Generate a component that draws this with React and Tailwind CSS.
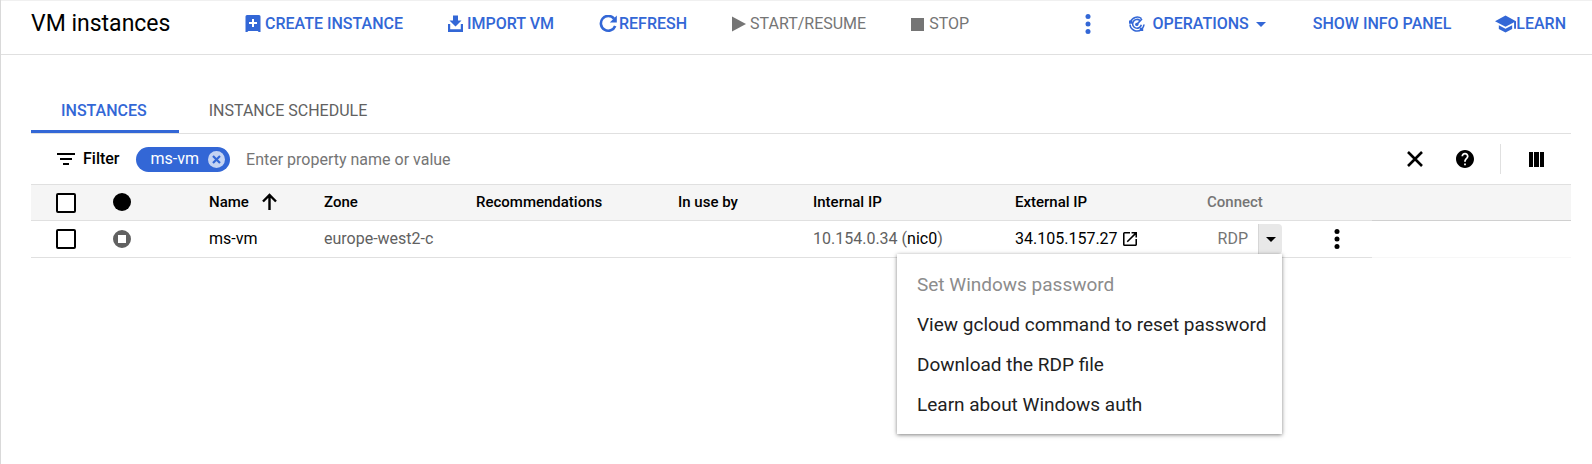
import React from "react";

const toolbarButton =
  "flex h-8 cursor-pointer items-center whitespace-nowrap text-base font-medium text-[#3367d6]";
const toolbarButtonDisabled =
  "flex h-8 items-center whitespace-nowrap text-base text-[#757575]";

function Icon({ className, viewBox = "0 0 24 24", children }) {
  return (
    <svg className={"shrink-0 " + className} viewBox={viewBox} fill="currentColor" aria-hidden="true">
      {children}
    </svg>
  );
}

function CreateIcon() {
  return (
    <Icon className="h-[18px] w-4" viewBox="0 0 16 18">
      <path
        fillRule="evenodd"
        d="M2 0h12a1.500 1.500 0 0 1 1.500 1.500v15.500h-1.800l-1-1h-9.400l-1 1H0.500V1.500A1.500 1.500 0 0 1 2 0zM7 4v3H4v2h3v3h2V9h3V7H9V4z"
      />
    </Icon>
  );
}

function ImportIcon() {
  return (
    <Icon className="h-[18px] w-[15px]" viewBox="0 0 15 18">
      <path d="M5 0.500h5v5h3.500L7.500 11.500 1.500 5.500H5z" />
      <path d="M0 9h2.200v5.200h10.600V9H15v8H0z" />
    </Icon>
  );
}

function RefreshIcon() {
  return (
    <Icon className="h-[18px] w-[18px]" viewBox="0 0 18 18">
      <path
        d="M15 3.600A7.400 7.400 0 1 0 16.200 11"
        fill="none"
        stroke="currentColor"
        strokeWidth="2.600"
      />
      <path d="M17.800 0.600v7h-7z" />
    </Icon>
  );
}

function OperationsIcon() {
  return (
    <Icon className="h-4 w-4" viewBox="0 0 16 16">
      <g fill="none" stroke="currentColor" strokeWidth="1.600">
        <path d="M12.500 2.600A7 7 0 0 0 1.500 6" />
        <path d="M1 8.500A7 7 0 0 0 12.500 13.300A7 7 0 0 0 15 8.500" />
        <path d="M11 4.600A4.400 4.400 0 1 0 12.300 8.800" />
        <path d="M7.800 8.400L13 3" />
      </g>
      <circle cx="7.800" cy="8.400" r="1.700" />
      <path d="M0 4.500h3.200v3.200H0zM10.800 11.800h3.400v3.200h-3.400z" />
    </Icon>
  );
}

function MoreIcon() {
  return (
    <Icon className="h-5 w-[6px]" viewBox="0 0 6 20">
      <circle cx="3" cy="2.500" r="2.500" />
      <circle cx="3" cy="10" r="2.500" />
      <circle cx="3" cy="17.500" r="2.500" />
    </Icon>
  );
}

function CaretIcon() {
  return (
    <Icon className="h-[5px] w-[10px]" viewBox="0 0 10 5">
      <path d="M0 0h10L5 5z" />
    </Icon>
  );
}

function Toolbar() {
  return (
    <header className="flex h-[55px] items-start border-t border-b border-t-[#f0f0f0] border-b-[#e0e0e0] pt-[7px] pr-[26px] pl-[30px]">
      <h1 className="w-[214px] shrink-0 text-[23px] leading-8 whitespace-nowrap">VM instances</h1>
      <div className="flex items-center gap-[45px]">
        <button type="button" className={toolbarButton + " gap-1"}>
          <CreateIcon />
          CREATE INSTANCE
        </button>
        <button type="button" className={toolbarButton + " gap-1"}>
          <ImportIcon />
          IMPORT VM
        </button>
        <button type="button" className={toolbarButton + " gap-[2px]"}>
          <RefreshIcon />
          REFRESH
        </button>
        <button type="button" disabled className={toolbarButtonDisabled + " gap-1"}>
          <Icon className="h-4 w-[14px]" viewBox="0 0 14 16">
            <path d="M0 0.500v15L14 8z" />
          </Icon>
          START/RESUME
        </button>
        <button type="button" disabled className={toolbarButtonDisabled + " gap-[5px]"}>
          <Icon className="h-[13px] w-[13px]" viewBox="0 0 13 13">
            <path d="M0 0h13v13H0z" />
          </Icon>
          STOP
        </button>
      </div>
      <div className="ml-auto flex items-center gap-[47px]">
        <div className="flex items-center gap-[38px]">
          <button type="button" aria-label="More actions" className={toolbarButton}>
            <MoreIcon />
          </button>
          <button type="button" className={toolbarButton + " gap-[7px]"}>
            <OperationsIcon />
            OPERATIONS
            <CaretIcon />
          </button>
        </div>
        <div className="flex items-center gap-[44px]">
          <button type="button" className={toolbarButton}>
            SHOW INFO PANEL
          </button>
          <button type="button" className={toolbarButton}>
            <Icon className="h-[18px] w-[21px]" viewBox="1 3 22 18">
              <path d="M5 13.180v4L12 21l7-3.820v-4L12 17l-7-3.820zM12 3L1 9l11 6 9-4.910V17h2V9L12 3z" />
            </Icon>
            LEARN
          </button>
        </div>
      </div>
    </header>
  );
}

function Tabs() {
  return (
    <div role="tablist" className="flex border-b border-[#e0e0e0]">
      <button
        type="button"
        role="tab"
        aria-selected="true"
        className="h-[46px] border-b-[3px] border-[#3367d6] pt-1 pr-8 pl-[30px] text-base font-medium text-[#3367d6]"
      >
        INSTANCES
      </button>
      <button
        type="button"
        role="tab"
        aria-selected="false"
        className="h-[46px] border-b-[3px] border-transparent pt-1 pr-8 pl-[30px] text-base text-[#616161]"
      >
        INSTANCE SCHEDULE
      </button>
    </div>
  );
}

function FilterBar() {
  return (
    <div className="flex h-[50px] items-center pl-[26px]">
      <Icon className="h-3 w-[18px]" viewBox="0 0 18 12">
        <path d="M0 0h18v2H0zM3 5h12v2H3zM6 10h6v2H6z" />
      </Icon>
      <label htmlFor="filter" className="ml-2 text-base font-medium">
        Filter
      </label>
      <span className="ml-4 flex h-[25px] items-center gap-[9px] rounded-full bg-[#3367d6] pr-[5px] pl-[15px] text-base text-white">
        ms-vm
        <button type="button" aria-label="Remove ms-vm" className="cursor-pointer text-[#c5d4f3]">
          <Icon className="h-[17px] w-[17px]" viewBox="0 0 17 17">
            <circle cx="8.500" cy="8.500" r="8.500" />
            <path d="M5 5l7 7M12 5l-7 7" stroke="#3367d6" strokeWidth="2.200" />
          </Icon>
        </button>
      </span>
      <input
        id="filter"
        type="text"
        placeholder="Enter property name or value"
        className="ml-4 h-8 min-w-0 flex-1 text-base outline-none placeholder:text-[#757575]"
      />
      <button type="button" aria-label="Clear filter" className="cursor-pointer">
        <Icon className="h-4 w-4" viewBox="0 0 16 16">
          <path d="M1 1l14 14M15 1L1 15" stroke="currentColor" strokeWidth="2.600" />
        </Icon>
      </button>
      <button type="button" aria-label="Help" className="ml-[33px] cursor-pointer">
        <Icon className="h-[18px] w-[18px]" viewBox="2 2 20 20">
          <path d="M12 2C6.480 2 2 6.480 2 12s4.480 10 10 10 10-4.480 10-10S17.520 2 12 2zm1 17h-2v-2h2v2zm2.070-7.750l-.9.920C13.450 12.900 13 13.500 13 15h-2v-.5c0-1.100.45-2.100 1.170-2.830l1.240-1.260c.37-.36.59-.86.59-1.410 0-1.100-.9-2-2-2s-2 .9-2 2H8c0-2.210 1.790-4 4-4s4 1.790 4 4c0 .88-.36 1.680-.93 2.250z" />
        </Icon>
      </button>
      <span className="ml-[26px] h-[30px] w-px bg-[#e0e0e0]" />
      <button type="button" aria-label="Column display options" className="mr-[27px] ml-[28px] cursor-pointer">
        <Icon className="h-[15px] w-[15px]" viewBox="0 0 15 15">
          <path d="M0 0h4v15H0zM5 0h5v15H5zM11 0h4v15h-4z" />
        </Icon>
      </button>
    </div>
  );
}

function Checkbox({ label }) {
  return (
    <input
      type="checkbox"
      aria-label={label}
      className="block h-5 w-5 appearance-none rounded-[2px] border-2 border-black bg-white"
    />
  );
}

function ConnectMenu() {
  const item = "block h-10 w-full px-5 text-left text-[19px] whitespace-nowrap";
  return (
    <div
      role="menu"
      className="absolute top-full right-0 z-10 w-[385px] bg-white pt-[11px] pb-[9px] text-[#212121] shadow-[0_1px_4px_rgba(0,0,0,0.5)]"
    >
      <button type="button" role="menuitem" disabled className={item + " text-[#8c8c8c]"}>
        Set Windows password
      </button>
      <button type="button" role="menuitem" className={item}>
        View gcloud command to reset password
      </button>
      <button type="button" role="menuitem" className={item}>
        Download the RDP file
      </button>
      <button type="button" role="menuitem" className={item}>
        Learn about Windows auth
      </button>
    </div>
  );
}

function InstancesTable() {
  const head = "border-y border-[#e0e0e0] pt-0 pr-0 pb-[2px] pl-3 text-left text-[15px] leading-5 font-medium";
  const cell = "border-b border-[#e0e0e0] p-0 pl-3";
  return (
    <table className="w-full table-fixed border-separate border-spacing-0 whitespace-nowrap">
      <colgroup>
        <col className="w-[70px]" />
        <col className="w-[96px]" />
        <col className="w-[115px]" />
        <col className="w-[152px]" />
        <col className="w-[202px]" />
        <col className="w-[135px]" />
        <col className="w-[202px]" />
        <col className="w-[192px]" />
        <col className="w-[105px]" />
        <col className="w-[72px]" />
        <col />
      </colgroup>
      <thead>
        <tr className="h-[37px] bg-[#f5f5f5]">
          <th className="border-y border-[#e0e0e0] p-0 pl-[25px]">
            <Checkbox label="Select all instances" />
          </th>
          <th className={head}>
            <Icon className="h-[18px] w-[18px]" viewBox="0 0 18 18">
              <circle cx="9" cy="9" r="9" />
            </Icon>
          </th>
          <th className={head} aria-sort="ascending">
            <button type="button" className="flex cursor-pointer items-center gap-[13px]">
              Name
              <Icon className="h-[17px] w-[15px]" viewBox="0 0 15 17">
                <path d="M7.500 17V2M1 8.500L7.500 2L14 8.500" fill="none" stroke="currentColor" strokeWidth="2.400" />
              </Icon>
            </button>
          </th>
          <th className={head}>Zone</th>
          <th className={head}>Recommendations</th>
          <th className={head}>In use by</th>
          <th className={head}>Internal IP</th>
          <th className={head}>External IP</th>
          <th className={head + " text-[#757575]"}>Connect</th>
          <th className={head} />
          <th className="border-y border-t-[#e0e0e0] border-b-[#d0d0d0] p-0" />
        </tr>
      </thead>
      <tbody>
        <tr className="h-[37px]">
          <td className="border-b border-[#e0e0e0] p-0 pl-[25px]">
            <Checkbox label="Select ms-vm" />
          </td>
          <td className={cell}>
            <Icon className="h-[18px] w-[18px] text-[#616161]" viewBox="0 0 18 18">
              <path fillRule="evenodd" d="M9 0a9 9 0 1 0 0 18A9 9 0 0 0 9 0zM5 5h8v8H5z" />
            </Icon>
          </td>
          <td className={cell}>
            <a href="#ms-vm">ms-vm</a>
          </td>
          <td className={cell + " text-[#616161]"}>europe-west2-c</td>
          <td className={cell} />
          <td className={cell} />
          <td className={cell + " text-[#616161]"}>
            10.154.0.34 (<a href="#nic0" className="text-black">nic0</a>)
          </td>
          <td className={cell}>
            <a href="#external-ip" className="flex items-center gap-[5px]">
              34.105.157.27
              <Icon className="h-[14px] w-[14px]" viewBox="3 3 18 18">
                <path d="M19 19H5V5h7V3H5a2 2 0 0 0-2 2v14a2 2 0 0 0 2 2h14c1.100 0 2-.9 2-2v-7h-2v7zM14 3v2h3.590l-9.830 9.830 1.410 1.410L19 6.410V10h2V3h-7z" />
              </Icon>
            </a>
          </td>
          <td className={cell}>
            <div className="relative mr-[18px] flex h-[30px] items-center justify-end gap-[10px]">
              <button type="button" disabled className="text-[#757575]">
                RDP
              </button>
              <button
                type="button"
                aria-label="Connection options"
                aria-haspopup="menu"
                aria-expanded="true"
                className="flex h-[30px] w-6 cursor-pointer items-center justify-center rounded-r-[4px] border-l border-[#d6d6d6] bg-[#e8e8e8]"
              >
                <CaretIcon />
              </button>
              <ConnectMenu />
            </div>
          </td>
          <td className={cell}>
            <button type="button" aria-label="More actions for ms-vm" className="ml-[22px] block cursor-pointer">
              <MoreIcon />
            </button>
          </td>
          <td className="border-b border-[#f7f7f7] p-0" />
        </tr>
      </tbody>
    </table>
  );
}

export default function App() {
  return (
    <div className="min-h-screen border-l border-[#d9d9d9] bg-white font-[Roboto,sans-serif] text-base text-black">
      <Toolbar />
      <main className="pt-8 pr-[21px] pb-8 pl-[30px]">
        <Tabs />
        <FilterBar />
        <InstancesTable />
      </main>
    </div>
  );
}
